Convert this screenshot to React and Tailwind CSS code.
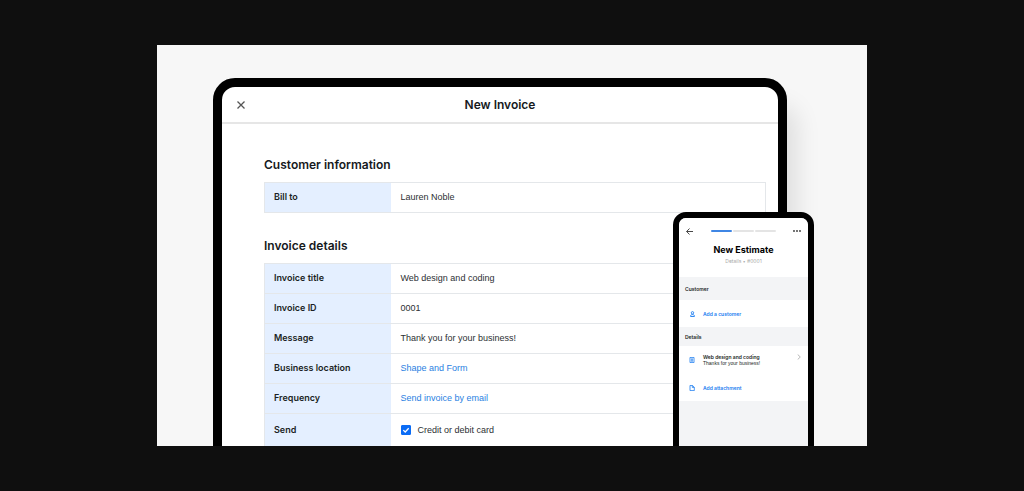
import React from "react";

const blue = "text-[#2a7fe2]";

function Row({ label, children, tall = false }) {
  return (
    <tr className={`${tall ? "h-[34px]" : "h-[30px]"} border-y border-[#e4e7ea]`}>
      <th
        scope="row"
        className="w-[126px] bg-[#e4efff] pb-px pl-[9px] text-left font-['Inter',sans-serif] text-[9px] font-semibold text-[#1b1f24]"
      >
        {label}
      </th>
      <td className="pb-px pl-[10px] text-[9px] text-[#2c2f33]">{children}</td>
    </tr>
  );
}

function Table({ children, label }) {
  return (
    <table
      aria-label={label}
      className="w-full border-collapse border border-[#e4e7ea] leading-3"
    >
      <tbody>{children}</tbody>
    </table>
  );
}

function SectionTitle({ children }) {
  return (
    <h2 className="mb-[9px] font-['Inter',sans-serif] text-[12px] font-semibold leading-4">
      {children}
    </h2>
  );
}

function Tablet() {
  return (
    <main className="ml-[56px] mr-[80px] h-[480px] rounded-t-[22px] border-[9px] border-black bg-white shadow-[14px_24px_24px_-4px_rgba(0,0,0,0.1)]">
      <header className="grid h-[37px] grid-cols-[38px_1fr_38px] items-center border-b-2 border-[#e6e6e6]">
        <button aria-label="Close" className="flex justify-center text-[#555]">
          <svg width="8" height="8" viewBox="0 0 8 8" fill="none" stroke="currentColor" strokeWidth="1.3">
            <path d="M0.5 0.5 7.5 7.5M7.5 0.5 0.5 7.5" />
          </svg>
        </button>
        <h1 className="text-center font-['Inter',sans-serif] text-[12px] font-semibold leading-4">
          New Invoice
        </h1>
      </header>
      <div className="flex flex-col gap-[25px] pl-[42px] pr-[12px] pt-[33px]">
        <section>
          <SectionTitle>Customer information</SectionTitle>
          <Table label="Customer information">
            <Row label="Bill to">Lauren Noble</Row>
          </Table>
        </section>
        <section>
          <SectionTitle>Invoice details</SectionTitle>
          <Table label="Invoice details">
            <Row label="Invoice title">Web design and coding</Row>
            <Row label="Invoice ID">0001</Row>
            <Row label="Message">Thank you for your business!</Row>
            <Row label="Business location">
              <a href="#location" className={blue}>Shape and Form</a>
            </Row>
            <Row label="Frequency">
              <a href="#frequency" className={blue}>Send invoice by email</a>
            </Row>
            <Row label="Send" tall>
              <label className="flex items-center gap-[7px]">
                <span className="grid">
                  <input
                    type="checkbox"
                    defaultChecked
                    className="peer col-start-1 row-start-1 size-[10px] appearance-none rounded-[1px] border border-[#0b6cf5] checked:bg-[#0b6cf5]"
                  />
                  <svg
                    className="pointer-events-none invisible col-start-1 row-start-1 peer-checked:visible"
                    width="10"
                    height="10"
                    viewBox="0 0 10 10"
                    fill="none"
                    stroke="white"
                    strokeWidth="1.3"
                  >
                    <path d="M2.3 5.1 4.2 7 7.7 3.3" />
                  </svg>
                </span>
                Credit or debit card
              </label>
            </Row>
          </Table>
        </section>
      </div>
    </main>
  );
}

function Phone() {
  return (
    <aside className="absolute -bottom-[40px] right-[53px] top-[167px] w-[141px] overflow-hidden rounded-t-[13px] border-[6px] border-black bg-[#f3f4f6] font-['Inter',sans-serif] text-[5px] leading-[8px] text-[#1b1f24]">
      <header className="h-[59px] bg-white px-[7px] pt-[8px]">
        <div className="flex h-[10px] items-center justify-between">
          <button aria-label="Back">
            <svg width="7" height="7" viewBox="0 0 7 7" fill="none" stroke="#333" strokeWidth="0.9">
              <path d="M7 3.5H0.7M3.5 0.5 0.6 3.5 3.5 6.5" />
            </svg>
          </button>
          <div className="flex gap-px" role="progressbar" aria-label="Step" aria-valuenow={1} aria-valuemax={3}>
            <span className="h-[2px] w-[21px] rounded-full bg-[#3f86e4]" />
            <span className="h-[2px] w-[21px] rounded-full bg-[#e4e4e4]" />
            <span className="h-[2px] w-[21px] rounded-full bg-[#e4e4e4]" />
          </div>
          <button aria-label="More">
            <svg width="8" height="2" viewBox="0 0 8 2" fill="#333">
              <circle cx="1" cy="1" r="0.9" />
              <circle cx="4" cy="1" r="0.9" />
              <circle cx="7" cy="1" r="0.9" />
            </svg>
          </button>
        </div>
        <h2 className="mt-[8px] text-center text-[9px] font-bold leading-3 text-black">New Estimate</h2>
        <p className="text-center leading-[10px] text-[#a8a8a8]">Details • #0001</p>
      </header>
      <h3 className="flex h-[23px] items-center px-[6px] font-semibold">Customer</h3>
      <div className="bg-white px-[9px] py-[9px]">
        <button className="flex h-[9px] items-center gap-[7px] font-semibold text-[#1a7cf0]">
          <span className="flex w-[8px] justify-center">
            <svg width="5" height="6" viewBox="0 0 5 6" fill="none" stroke="currentColor" strokeWidth="0.9">
              <circle cx="2.5" cy="1.8" r="1.2" />
              <path d="M0.6 5.5V4.9C0.6 4 1.4 3.6 2.5 3.6S4.4 4 4.4 4.9V5.5Z" />
            </svg>
          </span>
          Add a customer
        </button>
      </div>
      <h3 className="flex h-[19px] items-center px-[6px] font-semibold">Details</h3>
      <div className="flex h-[55px] flex-col bg-white pl-[9px] pr-[7px]">
        <button className="mt-[8px] flex items-center gap-[7px] text-left">
          <span className="flex w-[8px] justify-center text-[#1a7cf0]">
            <svg width="6" height="6" viewBox="0 0 6 6" fill="none" stroke="currentColor" strokeWidth="0.8">
              <path d="M1 0.4H5V5.6H1ZM2 2H4M2 3H4M2 4.1H4" />
            </svg>
          </span>
          <span className="flex-1 whitespace-nowrap leading-[6px]">
            <span className="block font-semibold">Web design and coding</span>
            <span className="block font-['Liberation_Sans',sans-serif]">Thanks for your business!</span>
          </span>
          <svg className="mb-[6px]" width="4" height="6" viewBox="0 0 4 6" fill="none" stroke="#999" strokeWidth="0.7">
            <path d="M0.7 0.5 3.3 3 0.7 5.5" />
          </svg>
        </button>
        <button className="mt-[17px] flex h-[10px] items-center gap-[7px] font-semibold text-[#1a7cf0]">
          <span className="flex w-[8px] justify-center">
            <svg width="6" height="6" viewBox="0 0 6 6" fill="none" stroke="currentColor" strokeWidth="0.8">
              <path d="M1 0.4H3.4L5.3 2.2V5.6H1ZM3.3 0.5V2.4H5.2" />
            </svg>
          </span>
          Add attachment
        </button>
      </div>
    </aside>
  );
}

export default function App() {
  return (
    <div className="flex h-screen justify-center bg-[#0f0f0f] py-[45px] font-['Liberation_Sans',Arial,sans-serif] text-[#16191d]">
      <div className="relative w-full max-w-[710px] overflow-hidden bg-[#f7f7f7] pt-[33px]">
        <Tablet />
        <Phone />
      </div>
    </div>
  );
}
